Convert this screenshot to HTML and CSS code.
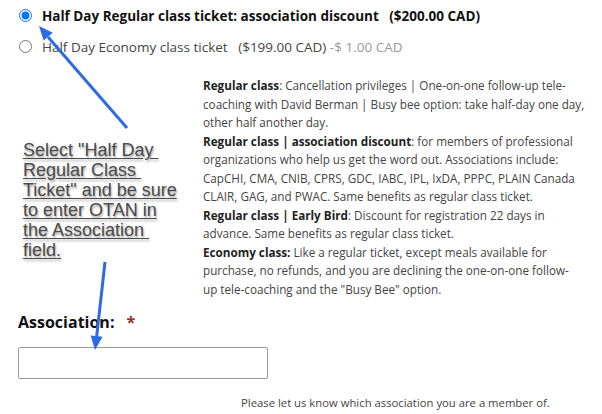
FILE: index.html
```html
<!DOCTYPE html>
<html lang="en">
<head>
  <meta charset="UTF-8">
  <title>Ticket options</title>
  <link rel="stylesheet" href="styles.css">
</head>
<body>

  <div class="page">
    <div class="options">
      <label class="option selected">
        <input type="radio" name="ticket" checked>
        <span>Half Day Regular class ticket: association discount&nbsp;&nbsp;&nbsp;($200.00 CAD)</span>
      </label>
      <label class="option">
        <input type="radio" name="ticket">
        <span>Half Day Economy class ticket&nbsp;&nbsp; ($199.00 CAD) <em class="diff">-$ 1.00 CAD</em></span>
      </label>
    </div>

    <div class="middle">
      <div class="callout">
        <p>Select "Half Day&nbsp;<br>Regular Class&nbsp;<br>Ticket" and be sure<br>to enter OTAN in<br>the Association&nbsp;<br>field.</p>
      </div>
      <div class="classes">
        <p><strong>Regular class</strong>: Cancellation privileges | One-on-one follow-up tele-<br>coaching with David Berman | Busy bee option: take half-day one day,<br>other half another day.</p>
        <p><strong>Regular class | association discount</strong>: for members of professional<br>organizations who help us get the word out. Associations include:<br>CapCHI, CMA, CNIB, CPRS, GDC, IABC, IPL, IxDA, PPPC, PLAIN Canada<br>CLAIR, GAG, and PWAC. Same benefits as regular class ticket.</p>
        <p><strong>Regular class | Early Bird</strong>: Discount for registration 22 days in<br>advance. Same benefits as regular class ticket.</p>
        <p><strong>Economy class:</strong> Like a regular ticket, except meals available for<br>purchase, no refunds, and you are declining the one-on-one follow-<br>up tele-coaching and the "Busy Bee" option.</p>
      </div>
    </div>

    <div class="field">
      <label class="field-label">Association: <span class="req">*</span></label>
      <input type="text" class="field-input">
      <p class="help">Please let us know which association you are a member of.</p>
    </div>

    <!-- annotation arrows drawn over the form -->
    <svg class="arrows" width="602" height="414" viewBox="0 0 602 414">
      <line x1="127" y1="128" x2="48" y2="37" />
      <polygon points="39,26 52.7,32.7 43.6,40.5" />
      <line x1="105" y1="262" x2="96.6" y2="337" />
      <polygon points="95,350 102.6,336.8 90.6,335.4" />
    </svg>
  </div>

</body>
</html>
```

FILE: styles.css
```css
body {
  margin: 0;
  background: #fff;
  font-family: 'Open Sans', 'Noto Sans', sans-serif;
  color: #333;
}

.page {
  position: relative;
  width: 602px;
  height: 414px;
  overflow: hidden;
}

.options {
  padding: 0 0 0 17px;
}

.option {
  display: flex;
  align-items: center;
  height: 31px;
  font-size: 13.5px;
  color: #444;
}

.option input {
  margin: 0 10px 0 2px;
  width: 13px;
  height: 13px;
}

.option.selected {
  font-weight: 700;
  color: #111;
}

.option .diff {
  font-style: normal;
  color: #999;
}

.middle {
  display: flex;
}

.callout {
  width: 180px;
  padding: 78px 0 0 23px;
}

.callout p {
  margin: 0;
  white-space: nowrap;
  font-family: 'Liberation Sans', Arial, sans-serif;
  font-size: 18px;
  line-height: 20px;
  color: #4a4a4a;
  text-decoration: underline;
  text-underline-offset: 2px;
  text-shadow: 1px 2px 2px rgba(0,0,0,0.35);
}

.classes {
  flex: 1;
  padding-top: 14px;
  font-size: 11.7px;
  line-height: 18.5px;
  color: #444;
  white-space: nowrap;
}

.classes p {
  margin: 0;
}

.classes strong {
  color: #222;
}

.field {
  padding: 13px 0 0 18px;
}

.field-label {
  display: block;
  font-size: 16px;
  line-height: 22px;
  font-weight: 700;
  color: #111;
}

.req {
  margin-left: 8px;
  color: #9b2c2c;
}

.field-input {
  display: block;
  box-sizing: border-box;
  width: 250px;
  height: 32px;
  margin-top: 14px;
  border: 1px solid #999;
  border-radius: 2px;
}

.help {
  margin: 16px 0 0 223px;
  font-size: 11.3px;
  line-height: 16px;
  color: #444;
}

.arrows {
  position: absolute;
  left: 0;
  top: 0;
  pointer-events: none;
}

.arrows line {
  stroke: #2d6be4;
  stroke-width: 3;
}

.arrows polygon {
  fill: #2d6be4;
}
```
